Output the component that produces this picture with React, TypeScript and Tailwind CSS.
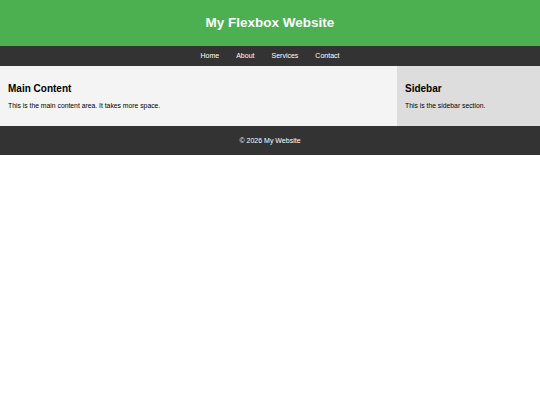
export default function App() {
  const links = ['Home', 'About', 'Services', 'Contact']

  return (
    <div className="min-h-screen bg-white font-['Liberation_Sans',Arial,sans-serif]">
      {/* Header */}
      <header className="h-[46px] bg-[#4caf50] flex items-center justify-center">
        <h1 className="text-[13.5px] font-bold text-white">My Flexbox Website</h1>
      </header>

      {/* Nav */}
      <nav className="h-[20px] bg-[#333333] flex items-center justify-center gap-[17px]">
        {links.map((link) => (
          <a key={link} href="#" className="text-[7px] text-white">
            {link}
          </a>
        ))}
      </nav>

      {/* Content */}
      <div className="flex h-[60px]">
        <main className="w-[397px] bg-[#f4f4f4] px-[8px] pt-[16px]">
          <h2 className="text-[10px] leading-[14px] font-bold text-black">Main Content</h2>
          <p className="text-[6.8px] leading-[9px] text-black mt-[5px]">This is the main content area. It takes more space.</p>
        </main>
        <aside className="flex-1 bg-[#dddddd] px-[8px] pt-[16px]">
          <h2 className="text-[10px] leading-[14px] font-bold text-black">Sidebar</h2>
          <p className="text-[6.8px] leading-[9px] text-black mt-[5px]">This is the sidebar section.</p>
        </aside>
      </div>

      {/* Footer */}
      <footer className="h-[29px] bg-[#333333] flex items-center justify-center">
        <p className="text-[7px] text-white mt-[1px]">© 2026 My Website</p>
      </footer>
    </div>
  )
}
